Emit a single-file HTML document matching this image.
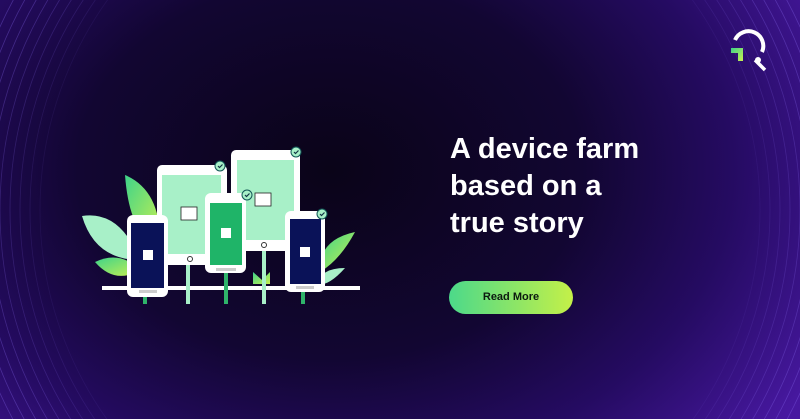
<!DOCTYPE html>
<html><head><style>
html,body{margin:0;padding:0;width:800px;height:419px;overflow:hidden}
body{position:relative;font-family:"Liberation Sans",sans-serif;
background:radial-gradient(ellipse 560px 420px at 330px 170px,#0a0418 0%,#120632 45%,#250b62 72%,#4718a0 100%);}
h1{position:absolute;left:450px;top:131px;margin:0;color:#fff;font-size:29px;line-height:37px;font-weight:bold;letter-spacing:0}
.btn{position:absolute;left:449px;top:281px;width:124px;height:33px;border-radius:17px;background:linear-gradient(90deg,#4cd98a,#c4f048);color:#0c1a10;font-size:11px;font-weight:bold;text-align:center;line-height:33px}
svg{position:absolute;left:0;top:0}
</style></head><body>
<svg width="800" height="419">
<defs>
<linearGradient id="lf" x1="0" y1="0" x2="1" y2="1"><stop offset="0" stop-color="#3ed38a"/><stop offset="1" stop-color="#c8f050"/></linearGradient>
<radialGradient id="rm" cx="400" cy="210" r="470" gradientUnits="userSpaceOnUse"><stop offset="0.72" stop-color="#000"/><stop offset="0.9" stop-color="#fff"/></radialGradient>
<mask id="m"><rect width="800" height="419" fill="url(#rm)"/></mask>
</defs>
<g mask="url(#m)" fill="none" stroke="#8a6af0" stroke-opacity="0.35" stroke-width="0.8">
<circle cx="400" cy="210" r="360"/><circle cx="400" cy="210" r="370"/><circle cx="400" cy="210" r="380"/><circle cx="400" cy="210" r="390"/><circle cx="400" cy="210" r="400"/><circle cx="400" cy="210" r="410"/><circle cx="400" cy="210" r="420"/><circle cx="400" cy="210" r="430"/><circle cx="400" cy="210" r="440"/>
</g>
<!-- leaves -->
<path d="M125 175 Q160 190 160 240 Q130 240 125 175Z" fill="url(#lf)"/>
<path d="M82 216 Q120 210 140 260 Q95 260 82 216Z" fill="#a8f0c8"/>
<path d="M95 262 Q120 250 140 270 Q115 285 95 262Z" fill="url(#lf)"/>
<path d="M355 232 Q340 260 320 272 Q318 240 355 232Z" fill="url(#lf)"/>
<path d="M345 268 Q330 285 318 285 Q320 268 345 268Z" fill="#a8f0c8"/>
<path d="M253 272 L262 280 L270 272 L270 284 L253 284Z" fill="url(#lf)"/>
<rect x="102" y="286" width="258" height="4" fill="#fff"/>
<rect x="143" y="290" width="4" height="14" fill="#2fb46a"/>
<rect x="186" y="262" width="4" height="42" fill="#a8f0c8"/>
<rect x="224" y="270" width="4" height="34" fill="#2fb46a"/>
<rect x="262" y="248" width="4" height="56" fill="#a8f0c8"/>
<rect x="301" y="290" width="4" height="14" fill="#2fb46a"/>
<rect x="157" y="165" width="70" height="100" rx="5" fill="#fff"/>
<rect x="162" y="175" width="59" height="79" fill="#a8f0c8"/>
<rect x="181" y="207" width="16" height="13" fill="#fff" stroke="#222" stroke-width="0.8"/>
<circle cx="190" cy="259" r="2.5" fill="none" stroke="#333"/>
<rect x="231" y="150" width="69" height="101" rx="5" fill="#fff"/>
<rect x="237" y="160" width="57" height="80" fill="#a8f0c8"/>
<rect x="255" y="193" width="16" height="13" fill="#fff" stroke="#222" stroke-width="0.8"/>
<circle cx="264" cy="245" r="2.5" fill="none" stroke="#333"/>
<rect x="127" y="215" width="41" height="82" rx="6" fill="#fff"/>
<rect x="131" y="223" width="33" height="65" fill="#0a1258"/>
<rect x="143" y="250" width="10" height="10" fill="#fff"/>
<rect x="139" y="290" width="18" height="3" fill="#ccc"/>
<rect x="205" y="193" width="41" height="80" rx="6" fill="#fff"/>
<rect x="210" y="203" width="32" height="62" fill="#1fb468"/>
<rect x="221" y="228" width="10" height="10" fill="#fff"/>
<rect x="216" y="268" width="20" height="3" fill="#ccc"/>
<rect x="285" y="211" width="40" height="81" rx="6" fill="#fff"/>
<rect x="290" y="219" width="31" height="65" fill="#0a1258"/>
<rect x="300" y="247" width="10" height="10" fill="#fff"/>
<rect x="296" y="286" width="18" height="3" fill="#ccc"/>
<g fill="#a8f0c8" stroke="#155" stroke-width="1">
<circle cx="220" cy="166" r="5"/><circle cx="296" cy="152" r="5"/><circle cx="247" cy="195" r="5"/><circle cx="322" cy="214" r="5"/>
</g>
<g fill="none" stroke="#134" stroke-width="1.2">
<path d="M218 166l1.5 1.5 3-3"/><path d="M294 152l1.5 1.5 3-3"/><path d="M245 195l1.5 1.5 3-3"/><path d="M320 214l1.5 1.5 3-3"/>
</g>
<path d="M735 40 A13 13 0 1 1 762 52" fill="none" stroke="#fff" stroke-width="4"/>
<path d="M755 60 L765 70" stroke="#fff" stroke-width="3.5"/>
<circle cx="758" cy="60" r="3" fill="#fff"/>
<path d="M731 48 H743 V61 H738 V53 H731Z" fill="url(#lf)"/>
</svg>
<h1>A device farm<br>based on a<br>true story</h1>
<div class="btn">Read More</div>
</body></html>
